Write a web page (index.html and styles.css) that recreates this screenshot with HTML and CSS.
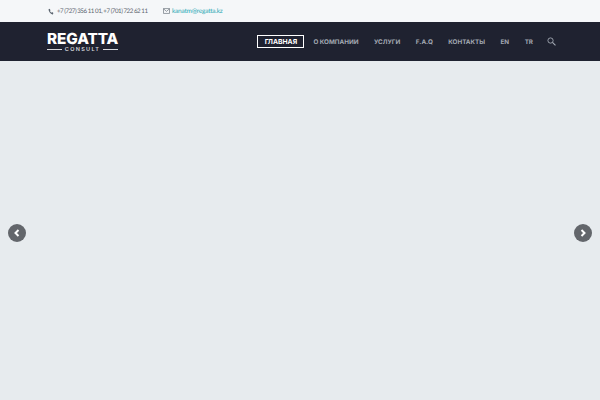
FILE: index.html
```html
<!DOCTYPE html>
<html lang="ru">
<head>
<meta charset="utf-8">
<title>Regatta Consult</title>
<link rel="stylesheet" href="styles.css">
</head>
<body>
<div class="topbar">
  <div class="contact phone">
    <svg class="ico" width="6" height="7" viewBox="0 0 24 24" preserveAspectRatio="none"><path fill="#5b6570" d="M6.6 2.5l3.6 5-2.3 2.6c1.2 2.8 3.200 4.800 6 6l2.600-2.300 5 3.600-1.800 3.900c-.4.700-1.200 1-2 .8C10.200 20.300 3.700 13.800 2 6.300c-.2-.8.100-1.600.8-2z"/></svg>
    <span>+7 (727) 356 11 01, +7 (701) 722 62 11</span>
  </div>
  <div class="contact mail">
    <svg class="ico" width="7" height="6" viewBox="0 0 18 16"><path fill="none" stroke="#6a737c" stroke-width="1.800" d="M1 1.500h16v13H1zM1 2l8 7 8-7"/></svg>
    <a href="#">kanatm@regatta.kz</a>
  </div>
</div>
<header class="header">
  <a class="logo" href="#">
    <span class="logo-main">REGATTA</span>
    <span class="logo-sub">CONSULT</span>
  </a>
  <nav class="nav">
    <a class="active" href="#">ГЛАВНАЯ</a>
    <a href="#">О КОМПАНИИ</a>
    <a href="#">УСЛУГИ</a>
    <a href="#">F.A.Q</a>
    <a href="#">КОНТАКТЫ</a>
    <a href="#">EN</a>
    <a href="#">TR</a>
    <svg class="search" width="9" height="9" viewBox="0 0 12 12"><circle cx="4.700" cy="4.700" r="3.500" fill="none" stroke="#a3a9b3" stroke-width="1.200"/><path d="M7.300 7.300L11.300 11.300" stroke="#a3a9b3" stroke-width="1.500"/></svg>
  </nav>
</header>
<main class="slider">
  <button class="arrow prev"><svg width="8" height="8" viewBox="0 0 8 8"><path d="M5.500 1L2.500 4l3 3" fill="none" stroke="#fff" stroke-width="2"/></svg></button>
  <button class="arrow next"><svg width="8" height="8" viewBox="0 0 8 8"><path d="M2.500 1l3 3-3 3" fill="none" stroke="#fff" stroke-width="2"/></svg></button>
</main>
</body>
</html>
```
FILE: styles.css
```css
* { box-sizing: border-box; }
html, body { margin: 0; height: 100%; overflow: hidden; }
body { display: flex; flex-direction: column; background: #e7ebee; font-family: Lato, sans-serif; text-rendering: geometricPrecision; }
.topbar { height: 22px; flex: none; background: #f5f7f9; display: flex; align-items: center; padding-left: 48px; font-size: 6.200px; color: #5d6670; }
.contact { display: flex; align-items: center; gap: 3px; white-space: nowrap; }
.phone { width: 115px; }
.phone span { letter-spacing: -.47px; }
.mail { gap: 2px; }
.mail a { color: #2aa9b5; text-decoration: none; font-size: 6.500px; letter-spacing: -.23px; }
.ico { flex: none; }
.header { height: 39px; flex: none; background: #1f2230; display: flex; align-items: center; justify-content: space-between; padding: 0 44px 0 47px; }
.logo { display: flex; flex-direction: column; color: #fff; text-decoration: none; width: 71px; }
.logo-main { font-family: Inter, sans-serif; font-weight: 800; font-size: 15.300px; line-height: 15px; letter-spacing: -.1px; white-space: nowrap; }
.logo-sub { display: flex; align-items: center; gap: 3px; font-family: Inter, sans-serif; font-size: 5.500px; font-weight: 600; letter-spacing: 1.300px; line-height: 6px; margin-top: 1px; color: #d5d7dc; }
.logo-sub::before, .logo-sub::after { content: ""; flex: 1; height: 1px; background: #d5d7dc; }
.nav { display: flex; align-items: center; gap: 15.500px; }
.nav a { color: #a3a9b3; text-decoration: none; font-family: Inter, sans-serif; font-weight: 700; font-size: 6.300px; white-space: nowrap; }
.nav a.active { color: #fff; border: 1px solid #fff; padding: 2px 0; width: 47px; height: 13px; line-height: 7px; margin-right: -6.500px; text-align: center; font-size: 6.800px; }
.search { flex: none; margin-left: -1.500px; }
.slider { flex: 1; position: relative; }
.arrow { position: absolute; top: 163px; width: 18px; height: 18px; border: 0; padding: 0; border-radius: 50%; background: #63666b; display: flex; align-items: center; justify-content: center; }
.prev { left: 8px; }
.next { right: 8px; }
```
